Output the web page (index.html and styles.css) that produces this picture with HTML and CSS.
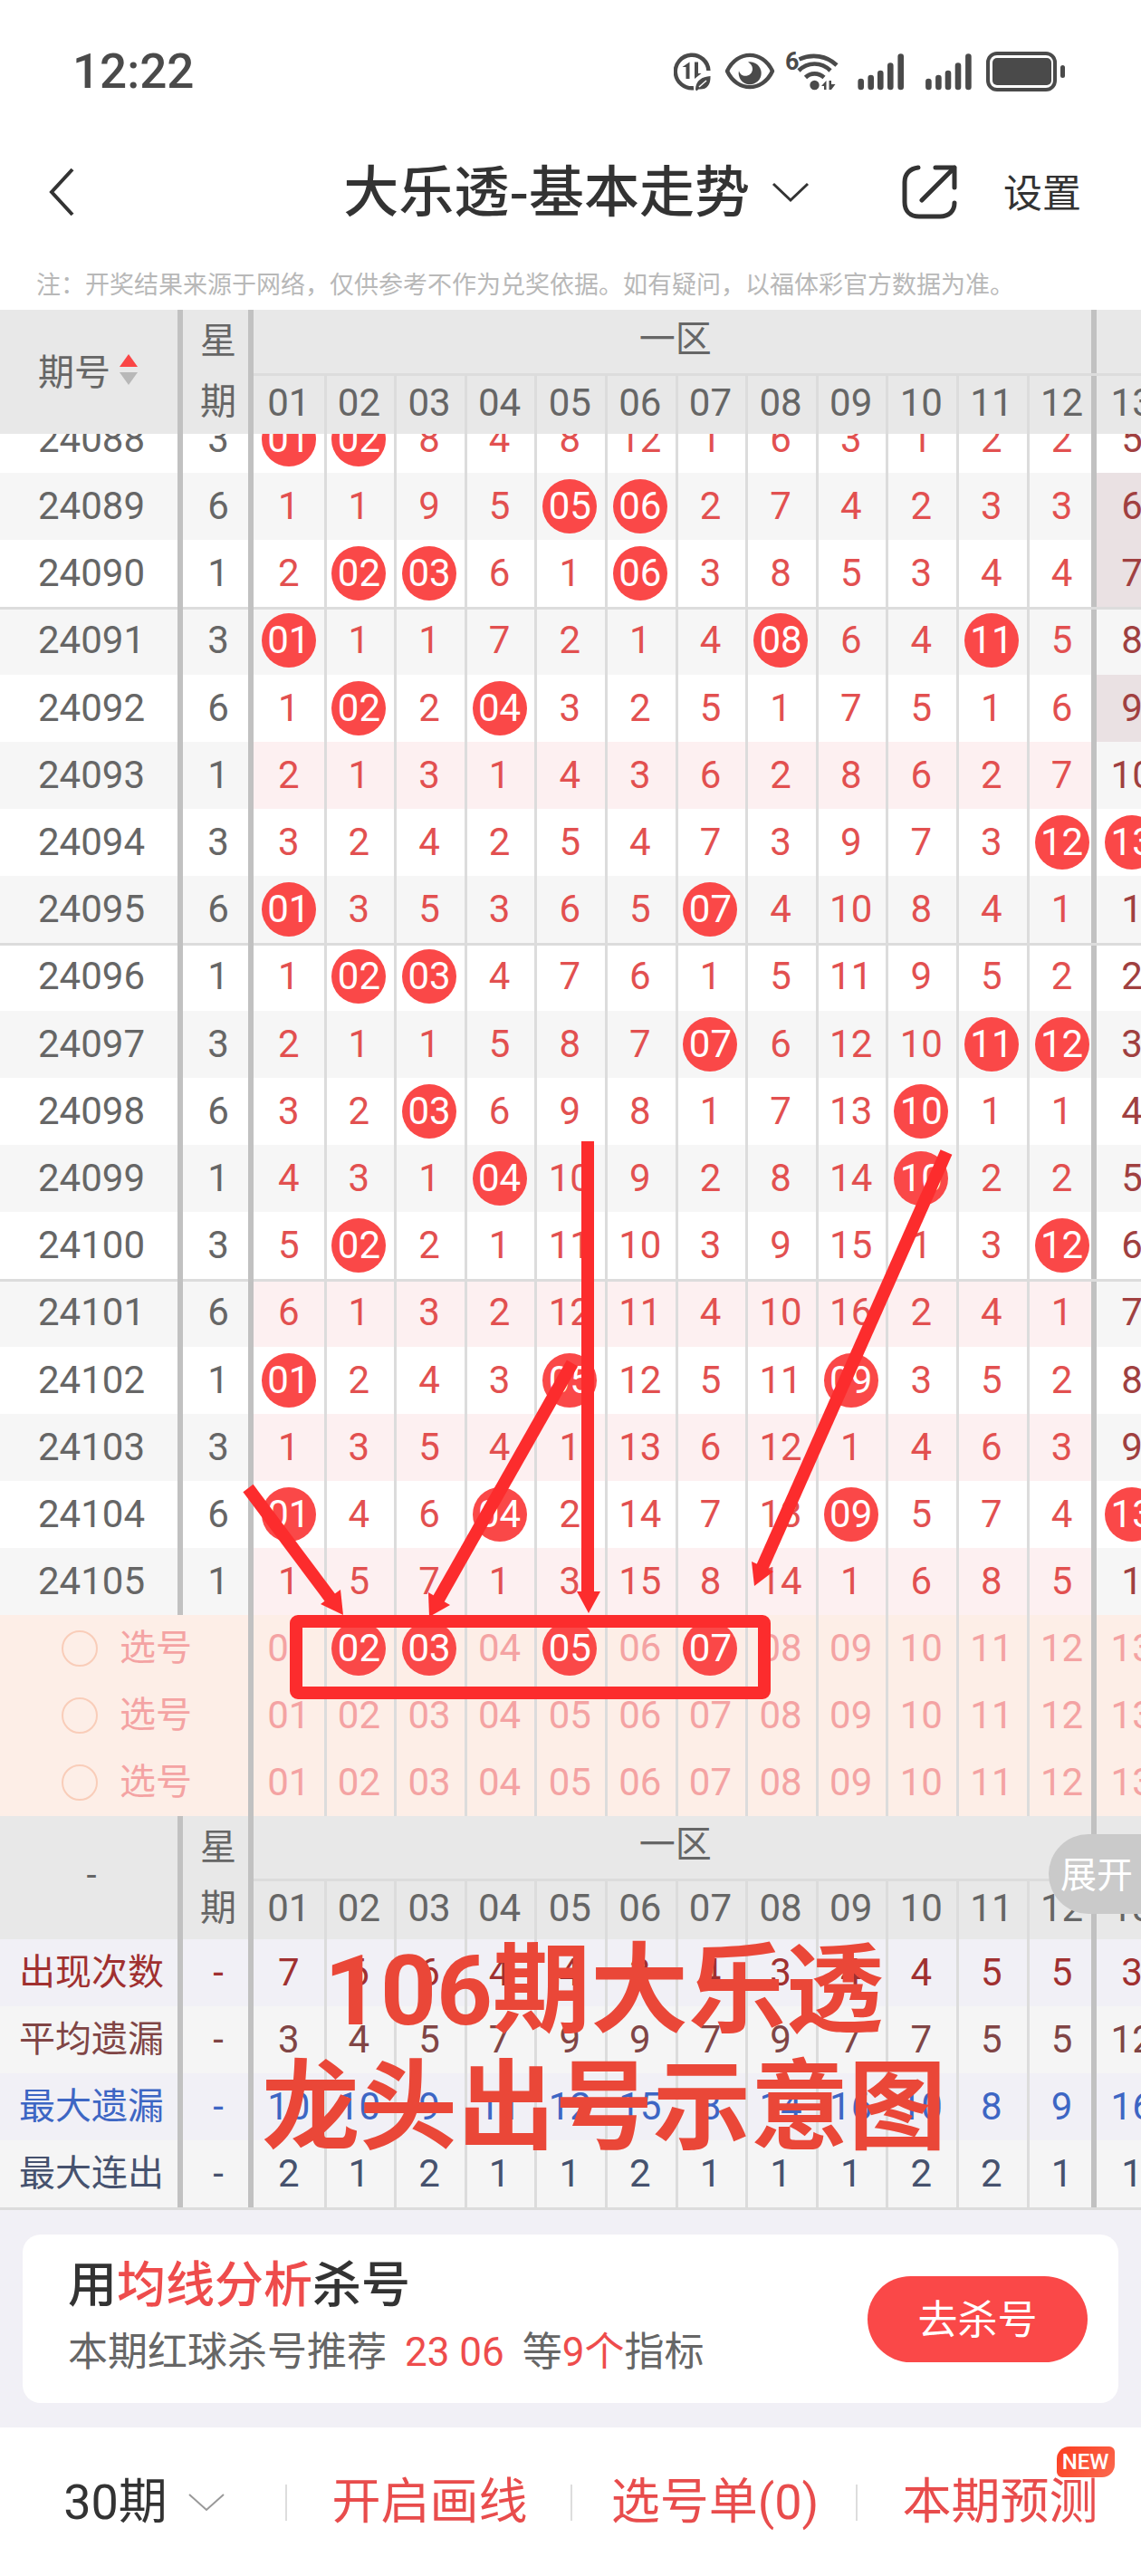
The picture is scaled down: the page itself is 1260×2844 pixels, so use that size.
FILE: index.html
```html
<!DOCTYPE html>
<html lang="zh-CN">
<head>
    <meta charset="UTF-8">
    <meta name="viewport" content="width=device-width, initial-scale=1.0">
    <title>大乐透-基本走势</title>
    <link rel="stylesheet" href="styles.css">
</head>
<body>
    <div class="status-bar">
        <span class="time">12:22</span>
        <svg class="status-icons" viewBox="0 0 434 44" width="434" height="44">
            <!-- data saver -->
            <path d="M38.4 21A18.3 18.3 0 1 0 22 40.2" fill="none" stroke="#4a4a4a" stroke-width="4.4"/>
            <path d="M13.5 30V17H9.5L17.5 11.5V30ZM23 11.5H27V24H30.5L23 30Z" fill="#4a4a4a"/>
            <path d="M40.5 27C41 37 36 42.5 27.5 41.5L25 43.5L24 41.5C24.5 32 31 27.5 40.5 27Z" fill="#4a4a4a"/>
            <path d="M28 39L36 32" stroke="#fff" stroke-width="1.5"/>
            <!-- eye -->
            <path d="M59 21.5C70 -2 98 -2 109 21.5C98 45 70 45 59 21.5Z" fill="none" stroke="#4a4a4a" stroke-width="4.4" stroke-linejoin="round"/>
            <path d="M82 11.5A12.5 12.5 0 1 1 72 21C74 30 87 28 87 19C87 16 85 13 82 11.5Z" fill="#4a4a4a"/>
            <!-- wifi 6 -->
            <text x="123" y="20" class="wifi-gen">6</text>
            <g fill="none" stroke="#4a4a4a" stroke-width="4.6">
                <path d="M138.5 8.5C153 2 169 4.5 180 15"/>
                <path d="M138 21C148 11 163 11 173 21"/>
                <path d="M145.5 28.5C151 23 160 23 166 28.5"/>
            </g>
            <circle cx="155.5" cy="37" r="5.2" fill="#4a4a4a"/>
            <path d="M163 38L168.5 32V42H166V38ZM171.5 32V42H174L178.5 36H174V32Z" fill="#4a4a4a"/>
            <!-- signal -->
            <g stroke="#4a4a4a" stroke-width="6.6" stroke-linecap="round">
                <path d="M206.7 33V39M217.7 29V39M228.3 24V39M239.3 15.5V39M250.7 5.5V39"/>
                <path d="M281.4 33V39M292.4 29V39M303 24V39M314 15.5V39M325.4 5.5V39"/>
            </g>
            <!-- battery -->
            <rect x="347" y="2" width="74" height="40" rx="10" fill="none" stroke="#4a4a4a" stroke-width="4"/>
            <rect x="352" y="7" width="65" height="30" rx="5" fill="#4a4a4a"/>
            <rect x="427" y="15" width="5" height="14" rx="2.5" fill="#4a4a4a"/>
        </svg>
    </div>

    <header class="nav">
        <button class="icon-btn" aria-label="返回">
            <svg viewBox="0 0 32 56" width="32" height="56"><path d="M28 3L5 28L28 53" fill="none" stroke="#333" stroke-width="4"/></svg>
        </button>
        <button class="nav-title">
            <span>大乐透-基本走势</span>
            <svg viewBox="0 0 42 24" width="42" height="24"><path d="M2 3L21 21L40 3" fill="none" stroke="#333" stroke-width="3"/></svg>
        </button>
        <button class="icon-btn" aria-label="分享">
            <svg viewBox="0 0 62 62" width="62" height="62">
                <path d="M18 4C9 5 3 11 3 20V42C3 52 9 58 19 58H42C52 58 58 52 58 43" fill="none" stroke="#333" stroke-width="5" stroke-linecap="round"/>
                <path d="M37 4H58V26M58 4L22 40" fill="none" stroke="#333" stroke-width="5" stroke-linecap="round" stroke-linejoin="round"/>
            </svg>
        </button>
        <button class="settings">设置</button>
    </header>

    <p class="note">注：开奖结果来源于网络，仅供参考不作为兑奖依据。如有疑问，以福体彩官方数据为准。</p>

    <main class="trend">
        <table class="grid" id="headTable"></table>
        <div class="scroller">
            <table class="grid" id="bodyTable"></table>
        </div>
        <table class="grid" id="statTable"></table>

        <!-- hand-drawn arrows and frame, coordinates start at the table's top left -->
        <svg class="marks" viewBox="0 0 1260 2094">
            <g stroke="#fc2c2d" stroke-width="14" fill="none">
                <path d="M274 1301L366 1424"/>
                <path d="M632 1163L484 1424"/>
                <path d="M649 918V1420"/>
                <path d="M1045 930L841 1390"/>
                <rect x="327" y="1448" width="517" height="79" rx="2"/>
            </g>
            <g fill="#fc2c2d">
                <path d="M379 1441L354 1429L376 1413Z"/>
                <path d="M474 1443L473 1416L497 1430Z"/>
                <path d="M650 1439L637 1415H663Z"/>
                <path d="M833 1409L830 1382L854 1393Z"/>
            </g>
        </svg>
        <p class="caption">106期大乐透<br>龙头出号示意图</p>
        <button class="expand">展开</button>
    </main>

    <section class="promo">
        <div class="card">
            <div>
                <h2>用<em>均线分析</em>杀号</h2>
                <p>本期红球杀号推荐 <em class="nums">23 06</em> 等<em>9个</em>指标</p>
            </div>
            <button class="go">去杀号</button>
        </div>
    </section>

    <footer class="tabs">
        <button class="tab dark">30期
            <svg viewBox="0 0 42 24" width="42" height="24"><path d="M2 3L21 20L40 3" fill="none" stroke="#999" stroke-width="2"/></svg>
        </button>
        <button class="tab">开启画线</button>
        <button class="tab">选号单(0)</button>
        <button class="tab"><span class="with-badge">本期预测<span class="badge">NEW</span></span></button>
    </footer>

    <script src="trend.js"></script>
</body>
</html>
```

FILE: trend.js
```js
const COLS = 13;

// issue, weekday, then one value per number; "*" marks a drawn ball
const draws = [
    '24088 3 * * 8 4 8 12 1 6 3 1 2 2 5',
    '24089 6 1 1 9 5 * * 2 7 4 2 3 3 6',
    '24090 1 2 * * 6 1 * 3 8 5 3 4 4 7',
    '24091 3 * 1 1 7 2 1 4 * 6 4 * 5 8',
    '24092 6 1 * 2 * 3 2 5 1 7 5 1 6 9',
    '24093 1 2 1 3 1 4 3 6 2 8 6 2 7 10',
    '24094 3 3 2 4 2 5 4 7 3 9 7 3 * *',
    '24095 6 * 3 5 3 6 5 * 4 10 8 4 1 1',
    '24096 1 1 * * 4 7 6 1 5 11 9 5 2 2',
    '24097 3 2 1 1 5 8 7 * 6 12 10 * * 3',
    '24098 6 3 2 * 6 9 8 1 7 13 * 1 1 4',
    '24099 1 4 3 1 * 10 9 2 8 14 * 2 2 5',
    '24100 3 5 * 2 1 11 10 3 9 15 1 3 * 6',
    '24101 6 6 1 3 2 12 11 4 10 16 2 4 1 7',
    '24102 1 * 2 4 3 * 12 5 11 * 3 5 2 8',
    '24103 3 1 3 5 4 1 13 6 12 1 4 6 3 9',
    '24104 6 * 4 6 * 2 14 7 13 * 5 7 4 *',
    '24105 1 1 5 7 1 3 15 8 14 1 6 8 5 1'
];

const stats = [
    ['count', '出现次数', '7 6 6 4 4 3 4 3 4 4 5 5 3'],
    ['average', '平均遗漏', '3 4 5 7 9 9 7 9 7 7 5 5 12'],
    ['longest', '最大遗漏', '10 10 9 11 12 15 8 14 16 10 8 9 16'],
    ['streak', '最大连出', '2 1 2 1 1 2 1 1 1 2 2 1 1']
];

const picked = [[2, 3, 5, 7], [], []];
const emptyInSecondZone = ['24089', '24090', '24092'];

const pad = n => String(n).padStart(2, '0');
const colgroup = '<colgroup><col class="c-issue"><col class="c-week">' + '<col>'.repeat(COLS) + '</colgroup>';

// number 12 closes the first zone
function cellClass(n) {
    return n === 12 ? 'n zone-end' : n === 1 || n === 13 ? 'n' : 'n line';
}

function head(label) {
    let html = `<thead><tr class="zone"><th rowspan="2" class="bar">${label}</th>` +
        '<th rowspan="2" class="bar week">星<br>期</th>' +
        '<th colspan="12" class="zone-name">一区</th><th class="zone-name"></th></tr><tr class="numbers">';
    for (let n = 1; n <= COLS; n++) {
        html += `<th class="${cellClass(n)}">${pad(n)}</th>`;
    }
    return html + '</tr></thead>';
}

function drawRow(text, i) {
    const [issue, week, ...values] = text.split(' ');
    const noBall = !values.slice(0, 12).includes('*');
    const cls = [i % 2 ? 'odd' : '', noBall ? 'blank' : '', i > 0 && i % 5 === 3 ? 'group' : ''].join(' ');
    let html = `<tr class="${cls}"><td class="bar">${issue}</td><td class="bar">${week}</td>`;
    values.forEach((v, k) => {
        const n = k + 1;
        const second = n === 13 ? ' second' + (emptyInSecondZone.includes(issue) ? ' none' : '') : '';
        html += `<td class="${cellClass(n)}${second}">${v === '*' ? `<span class="ball">${pad(n)}</span>` : v}</td>`;
    });
    return html + '</tr>';
}

function pickRow(list, i) {
    let html = `<tr class="pick"><td colspan="2" class="bar"><label><input type="radio" name="pick" value="${i}">选号</label></td>`;
    for (let n = 1; n <= COLS; n++) {
        html += `<td class="${cellClass(n)}"><button class="${list.includes(n) ? 'ball' : 'num'}">${pad(n)}</button></td>`;
    }
    return html + '</tr>';
}

function statRow([cls, label, values]) {
    let html = `<tr class="stat ${cls}"><td class="bar">${label}</td><td class="bar">-</td>`;
    values.split(' ').forEach((v, k) => {
        html += `<td class="${cellClass(k + 1)}">${v}</td>`;
    });
    return html + '</tr>';
}

document.getElementById('headTable').innerHTML = colgroup +
    head('<span class="sort">期号<svg viewBox="0 0 20 34" width="20" height="34"><path d="M10 0L20 14H0Z" fill="#fa4646"/><path d="M10 34L20 20H0Z" fill="#b8b8b8"/></svg></span>');
document.getElementById('bodyTable').innerHTML = colgroup +
    '<tbody>' + draws.map(drawRow).join('') + picked.map(pickRow).join('') + '</tbody>';
document.getElementById('statTable').innerHTML = colgroup + head('-') +
    '<tbody>' + stats.map(statRow).join('') + '</tbody>';
```

FILE: styles.css
```css
* {
    box-sizing: border-box;
    margin: 0;
    padding: 0;
}

body {
    font-family: Roboto, "Noto Sans CJK SC", sans-serif;
    color: #333;
    background-color: #fff;
    overflow-x: hidden;
}

button {
    font: inherit;
    color: inherit;
    background: none;
    border: none;
    cursor: pointer;
}

svg {
    display: block;
}

em {
    font-style: normal;
    color: #ee4c4c;
}

/* top of the screen */
.status-bar {
    display: flex;
    align-items: center;
    justify-content: space-between;
    height: 157px;
    padding: 0 82px 0 80px;
}

.time {
    font-size: 53px;
    font-weight: 500;
    color: #4a4a4a;
}

.wifi-gen {
    font-size: 27px;
    font-weight: 700;
    fill: #4a4a4a;
}

.nav {
    display: flex;
    align-items: center;
    height: 110px;
    padding: 0 66px 0 52px;
}

.nav-title {
    display: flex;
    align-items: center;
    gap: 24px;
    margin-left: auto;
    margin-right: 102px;
    font-family: "Noto Sans CJK SC", sans-serif;
    font-size: 61px;
    font-weight: 500;
    line-height: 80px;
}

.nav-title span {
    padding-bottom: 8px;
}

.settings {
    margin-left: 50px;
    padding-bottom: 4px;
    font-size: 43px;
}

.note {
    padding: 20px 40px 0;
    height: 75px;
    font-size: 27px;
    line-height: 56px;
    color: #b8b8b8;
    white-space: nowrap;
}

/* trend table */
.trend {
    position: relative;
    overflow: hidden;
    border-bottom: 3px solid #dcdcdc;
}

.scroller {
    overflow: hidden;
}

.scroller .grid {
    margin-top: -31px;
}

/* a little wider than the screen, number 13 runs off the edge */
.grid {
    width: 102.3%;
    table-layout: fixed;
    border-collapse: collapse;
    font-size: 42px;
    text-align: center;
}

.c-issue {
    width: 202px;
}

.c-week {
    width: 78px;
}

.grid th {
    font-weight: 400;
    color: #666;
    background-color: #e8e8e8;
}

.grid td {
    height: 74px;
    line-height: 60px;
    color: #666;
}

.grid .line {
    box-shadow: inset 3px 0 #dcdcdc;
}

.grid .bar,
.grid .zone-end {
    box-shadow: inset -6px 0 #c1c1c1;
}

.grid .zone-end {
    box-shadow: inset -6px 0 #c1c1c1, inset 3px 0 #dcdcdc;
}

.zone th {
    padding-bottom: 4px;
    font-size: 40px;
}

.zone .zone-name {
    height: 71px;
    line-height: 60px;
    border-bottom: 3px solid #dcdcdc;
}

.zone .zone-name:nth-child(3) {
    box-shadow: inset -6px 0 #c1c1c1;
}

.numbers th {
    height: 64px;
    padding-bottom: 4px;
    line-height: 60px;
}

.zone .week {
    padding-bottom: 0;
    line-height: 67px;
}

.sort {
    display: flex;
    align-items: center;
    justify-content: center;
    gap: 10px;
    padding-right: 8px;
}

.odd td {
    background-color: #f6f6f6;
}

.grid .n {
    color: #e25050;
}

.numbers .n {
    color: #666;
}

.grid .numbers .n {
    color: #666;
}

.blank .n {
    background-color: #fdf0f1;
}

.grid .second {
    color: #a04040;
}

.blank .second {
    background-color: #f6f6f6;
}

.grid .none {
    background-color: #eae1e3;
}

.group td {
    height: 75px;
    box-shadow: inset 0 3px #dcdcdc;
}

.grid .group .bar {
    box-shadow: inset -6px 0 #c1c1c1, inset 0 3px #dcdcdc;
}

.grid .group .line {
    box-shadow: inset 3px 3px #dcdcdc;
}

.grid .group .zone-end {
    box-shadow: inset 3px 3px #dcdcdc, inset -6px 0 #c1c1c1;
}

.ball {
    display: inline-block;
    width: 60px;
    height: 60px;
    line-height: 60px;
    border-radius: 50%;
    color: #fff;
    background-color: #fa4848;
    vertical-align: top;
}

.pick td {
    background-color: #fdeee7;
}

.grid .pick td {
    color: #f4a3a3;
}

.pick .num {
    vertical-align: top;
}

.pick label {
    display: flex;
    align-items: center;
    justify-content: center;
    gap: 24px;
    font-size: 40px;
}

.pick input {
    appearance: none;
    width: 40px;
    height: 40px;
    border: 2px solid #f9cdb9;
    border-radius: 50%;
}

.pick .ball {
    color: #fff;
}

.stat td {
    background-color: #f5f5f5;
}

.stat td:first-child {
    font-size: 40px;
    text-align: left;
    padding-left: 21px;
}

.count td,
.longest td {
    background-color: #f1f0f6;
}

.grid .count td {
    color: #a03030;
}

.grid .average td {
    color: #804545;
}

.grid .longest td {
    color: #3d66c4;
}

.grid .streak td {
    color: #46526e;
}

/* layers over the table */
.marks {
    position: absolute;
    left: 0;
    top: 0;
    width: 100%;
}

.caption {
    position: absolute;
    left: 0;
    right: 0;
    bottom: 45px;
    padding-left: 74px;
    font-size: 108px;
    font-weight: 700;
    line-height: 129px;
    text-align: center;
    color: #ea4738;
}

.expand {
    position: absolute;
    right: 0;
    bottom: 324px;
    width: 102px;
    height: 88px;
    padding: 0 0 4px 4px;
    border-radius: 44px 0 0 44px;
    font-size: 40px;
    white-space: nowrap;
    color: #fff;
    background-color: #cacaca;
}

/* promo card */
.promo {
    padding: 27px 25px;
    background-color: #f1f0f6;
}

.card {
    display: flex;
    align-items: center;
    justify-content: space-between;
    height: 186px;
    padding: 0 34px 0 50px;
    border-radius: 20px;
    background-color: #fff;
}

.card h2 {
    font-size: 54px;
    font-weight: 500;
    line-height: 74px;
}

.card p {
    font-size: 44px;
    line-height: 72px;
    color: #666;
}

.nums {
    margin: 0 9px;
}

.go {
    width: 243px;
    height: 95px;
    padding-bottom: 4px;
    border-radius: 48px;
    font-size: 44px;
    color: #fff;
    background-color: #fa4848;
}

/* bottom bar */
.tabs {
    display: grid;
    grid-template-columns: repeat(4, 1fr);
    align-items: center;
    height: 166px;
}

.tab {
    display: flex;
    align-items: center;
    justify-content: center;
    gap: 22px;
    padding-left: 4px;
    font-size: 54px;
    line-height: 80px;
    white-space: nowrap;
    color: #e84c4c;
    background: linear-gradient(#ddd, #ddd) left center / 2px 40px no-repeat;
}

.dark {
    color: #333;
    background: none;
}

.with-badge {
    position: relative;
}

.badge {
    position: absolute;
    right: -18px;
    top: -22px;
    padding: 0 6px;
    border-radius: 14px 6px 14px 6px;
    font-size: 24px;
    font-weight: 500;
    line-height: 34px;
    color: #fff;
    background: linear-gradient(135deg, #fb3c1e, #fb6a50);
}
```
